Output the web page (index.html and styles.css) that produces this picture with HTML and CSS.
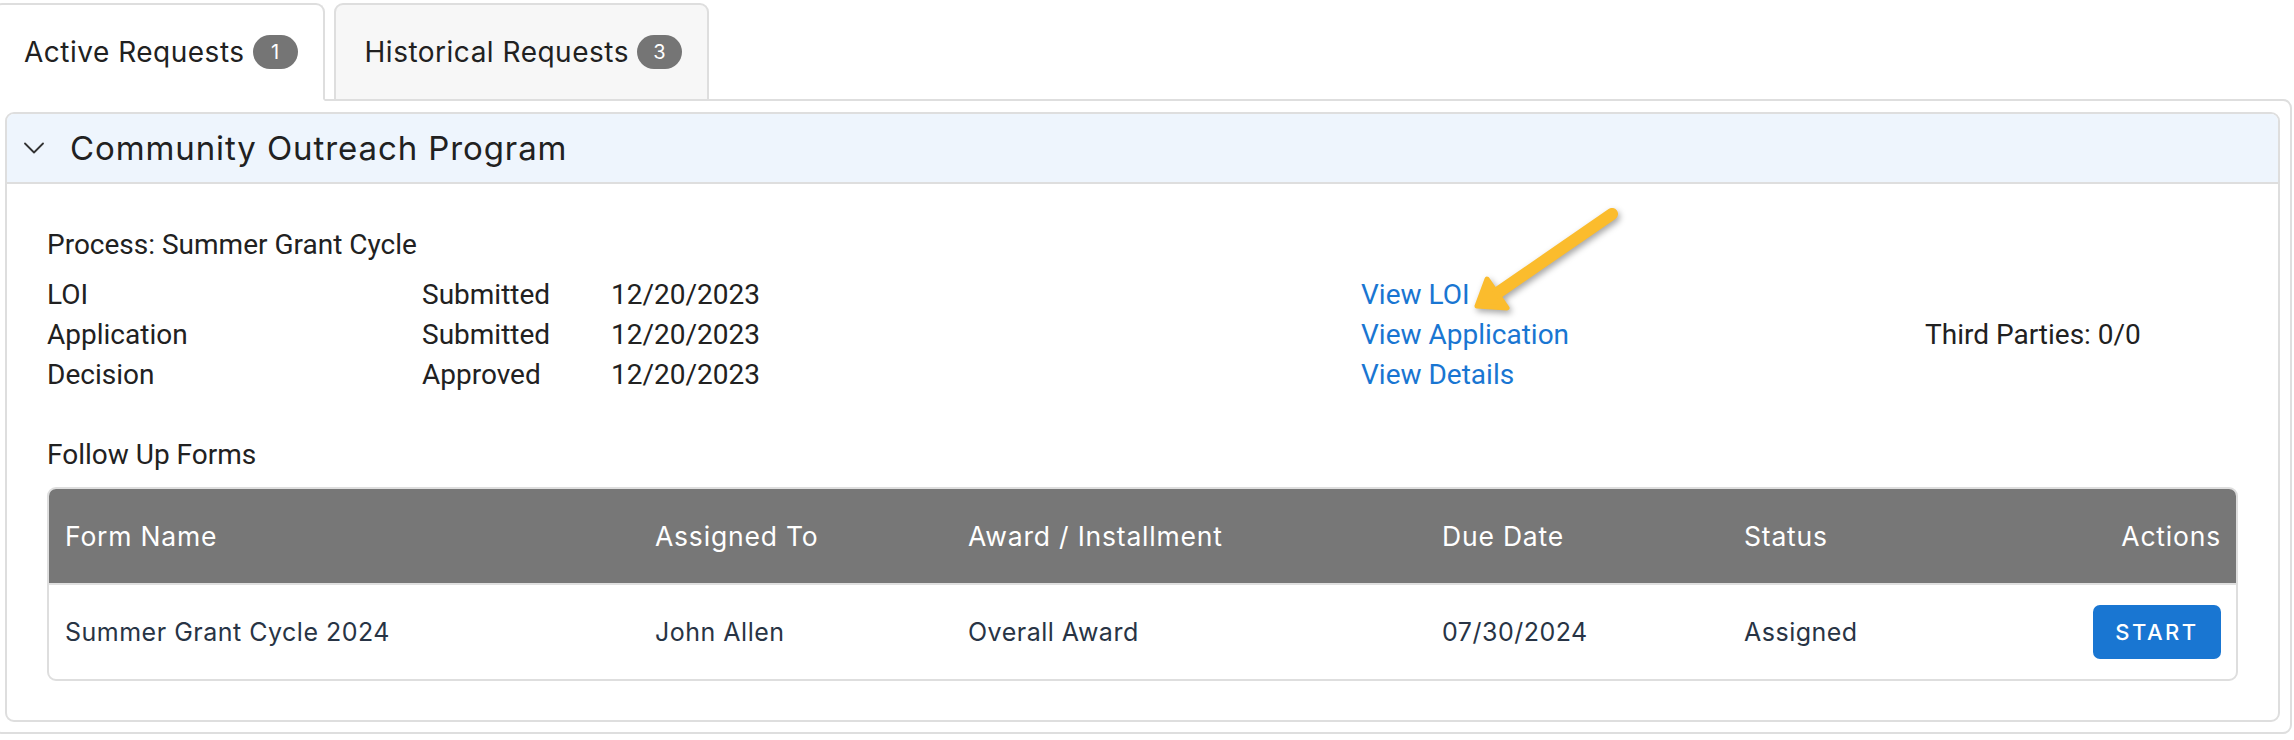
FILE: index.html
```html
<!DOCTYPE html>
<html lang="en">
<head>
<meta charset="utf-8">
<title>Requests</title>
<link rel="stylesheet" href="styles.css">
</head>
<body>
<div class="page">
  <div class="tabs">
    <div class="tab tab-active"><span class="tab-label">Active Requests</span><span class="badge">1</span></div>
    <div class="tab tab-hist"><span class="tab-label">Historical Requests</span><span class="badge">3</span></div>
  </div>
  <div class="panel">
    <div class="acc">
      <div class="acc-head">
        <svg class="chev" viewBox="0 0 20 20" width="20" height="20"><path d="M1 5.5 L10 14.5 L19 5.5" fill="none" stroke="#333" stroke-width="1.8" stroke-linecap="round" stroke-linejoin="round"/></svg>
        <span class="acc-title">Community Outreach Program</span>
      </div>
      <div class="acc-body">
        <div class="process">Process: Summer Grant Cycle</div>
        <div class="steps">
          <span>LOI</span><span>Submitted</span><span>12/20/2023</span><a class="link" href="#">View LOI</a><span></span>
          <span>Application</span><span>Submitted</span><span>12/20/2023</span><a class="link" href="#">View Application</a><span>Third Parties: 0/0</span>
          <span>Decision</span><span>Approved</span><span>12/20/2023</span><a class="link" href="#">View Details</a><span></span>
        </div>
        <div class="follow">Follow Up Forms</div>
        <div class="table-wrap">
          <table class="forms">
            <colgroup>
              <col class="c1"><col class="c2"><col class="c3"><col class="c4"><col class="c5"><col class="c6">
            </colgroup>
            <thead>
              <tr><th>Form Name</th><th>Assigned To</th><th>Award / Installment</th><th>Due Date</th><th>Status</th><th class="right">Actions</th></tr>
            </thead>
            <tbody>
              <tr><td>Summer Grant Cycle 2024</td><td>John Allen</td><td>Overall Award</td><td>07/30/2024</td><td>Assigned</td><td class="right"><button class="start">START</button></td></tr>
            </tbody>
          </table>
        </div>
      </div>
    </div>
  </div>
</div>
<svg class="arrow" viewBox="1440 190 200 140" width="200" height="140">
  <line x1="1612" y1="214" x2="1496" y2="294" stroke="#fbbc2d" stroke-width="12" stroke-linecap="round"/>
  <polygon points="1477,306 1487,279 1507,308" fill="#fbbc2d" stroke="#fbbc2d" stroke-width="5" stroke-linejoin="round"/>
</svg>
</body>
</html>
```
FILE: styles.css
```css
html, body {
  margin: 0;
  padding: 0;
  background: #ffffff;
}
body {
  position: relative;
  width: 2294px;
  height: 740px;
  overflow: hidden;
  font-family: Roboto, "Liberation Sans", sans-serif;
  color: #212121;
}
.page {
  margin: 0 2px 0 -7px;
  padding-top: 3px;
}
.tabs {
  display: flex;
  gap: 9px;
  position: relative;
  z-index: 1;
  margin-bottom: -2px;
}
.tab {
  box-sizing: border-box;
  height: 98px;
  display: flex;
  align-items: center;
  flex-shrink: 0;
  white-space: nowrap;
  padding: 0 25px 0 29px;
  border: 2px solid #dedede;
  border-radius: 9px 9px 0 0;
  background: #f7f7f7;
  font-family: Inter, "Open Sans", sans-serif;
  font-size: 28px;
  letter-spacing: 0.5px;
  color: #212121;
}
.tab-active {
  background: #ffffff;
  border-bottom-color: #ffffff;
}
.badge {
  flex-shrink: 0;
  margin-left: 8px;
  min-width: 45px;
  height: 34px;
  border-radius: 17px;
  background: #757575;
  color: #ffffff;
  font-size: 20px;
  letter-spacing: 0;
  display: inline-flex;
  align-items: center;
  justify-content: center;
}
.panel {
  border: 2px solid #dedede;
  border-radius: 0 9px 9px 9px;
  padding: 11px 10px 10px 10px;
}
.acc {
  border: 2px solid #dedede;
  border-radius: 9px;
  overflow: hidden;
}
.acc-head {
  height: 68px;
  display: flex;
  align-items: center;
  gap: 26px;
  padding-left: 17px;
  background: #eef5fd;
  border-bottom: 2px solid #dedede;
}
.chev {
  display: block;
}
.acc-title {
  font-family: Inter, "Open Sans", sans-serif;
  font-size: 33px;
  letter-spacing: 0.9px;
  color: #212121;
}
.acc-body {
  padding: 41px 40px 39px 40px;
  font-size: 28px;
  line-height: 40px;
}
.process {
  margin-bottom: 10px;
}
.steps {
  display: grid;
  grid-template-columns: 375px 189px 750px 564px 1fr;
}
.link {
  color: #1976d2;
  text-decoration: none;
}
.follow {
  margin-top: 40px;
}
.table-wrap {
  margin-top: 12px;
  border: 2px solid #dedede;
  border-radius: 9px;
  overflow: hidden;
}
.forms {
  width: 100%;
  table-layout: fixed;
  border-collapse: collapse;
  font-family: Inter, "Open Sans", sans-serif;
}
.c1 { width: 590px; }
.c2 { width: 313px; }
.c3 { width: 474px; }
.c4 { width: 302px; }
.c5 { width: 322px; }
.forms th {
  height: 94px;
  padding: 0 16px;
  background: #777777;
  color: #ffffff;
  font-size: 26.5px;
  letter-spacing: 0.8px;
  font-weight: 400;
  text-align: left;
  border-bottom: 2px solid #e0e0e0;
  line-height: 1;
}
.forms td {
  height: 94px;
  padding: 0 16px;
  color: #283445;
  font-size: 25px;
  letter-spacing: 0.5px;
  line-height: 1;
}
.forms .right {
  text-align: right;
  padding-right: 15px;
}
.start {
  width: 128px;
  height: 54px;
  border: none;
  border-radius: 7px;
  background: #1976d2;
  color: #ffffff;
  font-family: Inter, "Open Sans", sans-serif;
  font-size: 22px;
  font-weight: 500;
  letter-spacing: 2.5px;
  vertical-align: middle;
}
.arrow {
  position: absolute;
  left: 1440px;
  top: 190px;
  filter: drop-shadow(2px 3px 3px rgba(0, 0, 0, 0.35));
}
```
